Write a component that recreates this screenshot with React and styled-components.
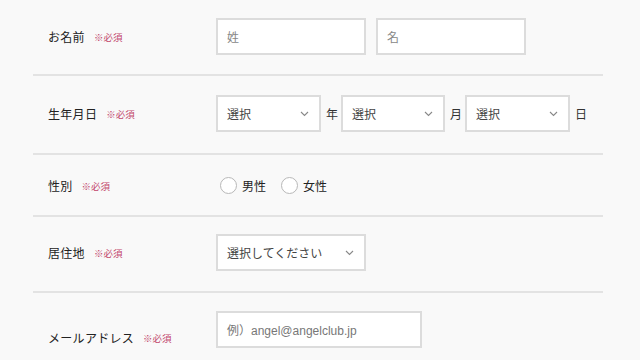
import React from 'react';
import styled, { createGlobalStyle } from 'styled-components';

const GlobalStyle = createGlobalStyle`
  html, body {
    margin: 0;
    padding: 0;
    background: #f9f9f9;
  }
  body {
    font-family: "Liberation Sans", "Noto Sans CJK JP", sans-serif;
    color: #333;
  }
`;

const Form = styled.div`
  width: 570px;
  margin-left: 33px;
`;

const Row = styled.div`
  display: flex;
  align-items: center;
  padding: ${(p) => p.pad || '18px 0 19px'};
  border-bottom: ${(p) => (p.last ? 'none' : '2px solid #e3e3e3')};
`;

const LabelCell = styled.div`
  width: 183px;
  padding-left: 15px;
  box-sizing: border-box;
  display: flex;
  align-items: center;
  flex-shrink: 0;
  margin-top: ${(p) => p.shift || 0}px;
`;

const LabelText = styled.span`
  font-size: 12px;
  color: #222;
  letter-spacing: 0.3px;
`;

const Required = styled.span`
  font-size: 9.5px;
  color: #c2466b;
  margin-left: 9px;
  margin-top: 1px;
`;

const Field = styled.div`
  display: flex;
  align-items: center;
  gap: ${(p) => p.gap ?? 10}px;
`;

const TextBox = styled.div`
  width: ${(p) => p.w}px;
  height: 37px;
  box-sizing: border-box;
  background: #fff;
  border: 2px solid #dcdcdc;
  display: flex;
  align-items: center;
  padding-left: 9px;
  font-size: 12px;
  color: ${(p) => p.tone || '#888'};
`;

const SelectBox = styled.div`
  width: ${(p) => p.w}px;
  height: 37px;
  box-sizing: border-box;
  background: #fff;
  border: 2px solid #dcdcdc;
  display: flex;
  align-items: center;
  justify-content: space-between;
  padding: 0 10px 0 9px;
  font-size: 12px;
  color: #444;
`;

const Unit = styled.span`
  font-size: 12px;
  color: #333;
  margin: 0 3px 0 5px;
`;

const RadioItem = styled.label`
  display: flex;
  align-items: center;
  font-size: 12px;
  color: #222;
  margin-right: 15px;
`;

const Circle = styled.span`
  width: 17px;
  height: 17px;
  box-sizing: border-box;
  border-radius: 50%;
  border: 1px solid #b8b8b8;
  background: #fff;
  margin-right: 5px;
`;

const Chevron = () => (
  <svg width="9" height="6" viewBox="0 0 9 6">
    <path d="M1 1l3.5 3.5L8 1" fill="none" stroke="#888" strokeWidth="1.1" />
  </svg>
);

const Label = ({ children, shift }) => (
  <LabelCell shift={shift}>
    <LabelText>{children}</LabelText>
    <Required>※必須</Required>
  </LabelCell>
);

const Select = ({ w, children }) => (
  <SelectBox w={w}>
    <span>{children}</span>
    <Chevron />
  </SelectBox>
);

export default function App() {
  return (
    <>
      <GlobalStyle />
      <Form>
        <Row>
          <Label>お名前</Label>
          <Field>
            <TextBox w={150}>姓</TextBox>
            <TextBox w={150}>名</TextBox>
          </Field>
        </Row>
        <Row pad="19px 0 21px">
          <Label>生年月日</Label>
          <Field gap={0}>
            <Select w={105}>選択</Select>
            <Unit>年</Unit>
            <Select w={104}>選択</Select>
            <Unit>月</Unit>
            <Select w={105}>選択</Select>
            <Unit>日</Unit>
          </Field>
        </Row>
        <Row pad="22px 0 21px">
          <Label>性別</Label>
          <Field gap={0}>
            <RadioItem>
              <Circle style={{ marginLeft: 4 }} />
              男性
            </RadioItem>
            <RadioItem>
              <Circle />
              女性
            </RadioItem>
          </Field>
        </Row>
        <Row pad="17px 0 20px">
          <Label>居住地</Label>
          <Field>
            <Select w={150}>選択してください</Select>
          </Field>
        </Row>
        <Row pad="18px 0 10px" last>
          <Label shift={16}>メールアドレス</Label>
          <Field>
            <TextBox w={206} tone="#777">例）angel@angelclub.jp</TextBox>
          </Field>
        </Row>
      </Form>
    </>
  );
}
